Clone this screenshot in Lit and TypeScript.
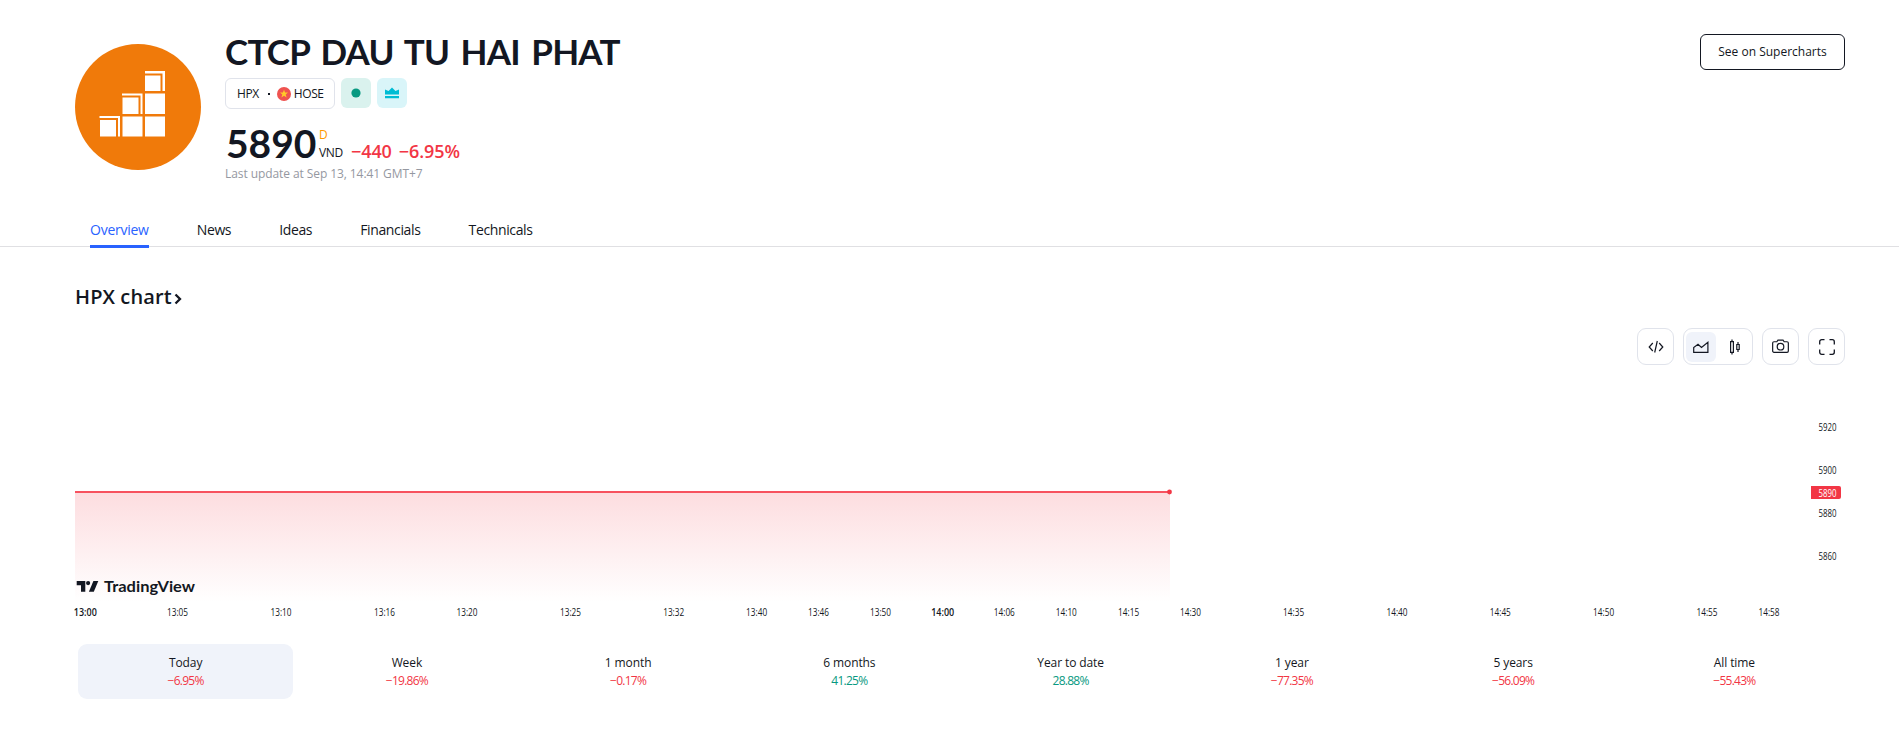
import { LitElement, html, css, svg } from "lit";
import { customElement } from "lit/decorators.js";
import { classMap } from "lit/directives/class-map.js";

const tabs = ["Overview", "News", "Ideas", "Financials", "Technicals"];

const periods = [
  { label: "Today", value: "−6.95%" },
  { label: "Week", value: "−19.86%" },
  { label: "1 month", value: "−0.17%" },
  { label: "6 months", value: "41.25%" },
  { label: "Year to date", value: "28.88%" },
  { label: "1 year", value: "−77.35%" },
  { label: "5 years", value: "−56.09%" },
  { label: "All time", value: "−55.43%" },
];

const times: [string, number, boolean?][] = [
  ["13:00", 10.3, true], ["13:05", 102.5], ["13:10", 206], ["13:16", 309.5],
  ["13:20", 392], ["13:25", 495.5], ["13:32", 598.7], ["13:40", 681.6],
  ["13:46", 743.5], ["13:50", 805.5], ["14:00", 867.7, true], ["14:06", 929.3],
  ["14:10", 991.3], ["14:15", 1053.6], ["14:30", 1115.5], ["14:35", 1218.6],
  ["14:40", 1322], ["14:45", 1425.3], ["14:50", 1528.6], ["14:55", 1632], ["14:58", 1694],
];

const prices: [string, number][] = [["5920", 31], ["5900", 74], ["5880", 117], ["5860", 159.5]];

@customElement("price-chart")
class PriceChart extends LitElement {
  static styles = css`
    :host { display: block; }
    svg { display: block; overflow: visible; }
    text { font-family: "Open Sans", sans-serif; font-size: 10px; fill: #131722; }
    .mid { text-anchor: middle; }
    .major { font-weight: 600; }
    .tag { fill: #fff; }
    .brand { font-family: Lato, sans-serif; font-weight: 700; font-size: 16px; }
  `;
  render() {
    return html`<svg width="1770" height="230" viewBox="0 0 1770 230">
      <defs>
        <linearGradient id="fade" x1="0" y1="0" x2="0" y2="1">
          <stop offset="0" stop-color="#f23645" stop-opacity=".17" />
          <stop offset="1" stop-color="#f23645" stop-opacity="0" />
        </linearGradient>
      </defs>
      <rect x="0" y="96" width="1095" height="110" fill="url(#fade)" />
      <rect x="0" y="95" width="1095" height="2" fill="#f7525f" />
      <circle cx="1094.5" cy="96" r="2.4" fill="#f23645" />
      ${prices.map(([p, y]) => svg`<text x="1743.5" y=${y + 4.3} textLength="18" lengthAdjust="spacingAndGlyphs">${p}</text>`)}
      <path d="M1736 90h28a2 2 0 0 1 2 2v9a2 2 0 0 1-2 2h-28z" fill="#f23645" />
      <text class="tag" x="1743.5" y="100.5" textLength="18" lengthAdjust="spacingAndGlyphs">5890</text>
      ${times.map(([t, x, major]) => svg`<text class=${major ? "mid major" : "mid"} x=${x} y="220.3" textLength=${major ? 23 : 21} lengthAdjust="spacingAndGlyphs">${t}</text>`)}
      <g transform="translate(1.7 185)" fill="#131722">
        <path d="M0 0h8.6v10.7H4.3V4.3H0z" />
        <circle cx="11.4" cy="2.1" r="2.1" />
        <path d="M12.2 10.7 16.7 0h4.9l-4.5 10.7z" />
      </g>
      <text class="brand" x="29" y="196" textLength="91" lengthAdjust="spacingAndGlyphs">TradingView</text>
    </svg>`;
  }
}

@customElement("app-root")
export class AppRoot extends LitElement {
  static styles = css`
    :host { display: block; width: 1899px; height: 753px; overflow: hidden; background: #fff; color: #131722; font-family: "Open Sans", sans-serif; }
    * { box-sizing: border-box; }
    svg { display: block; }
    .header { display: flex; height: 209px; padding: 34px 54px 0 75px; }
    .logo { margin: 10px 24px 0 0; flex: none; }
    .info { flex: 1; }
    .title { margin: -8px 0 0; height: 52px; font: 700 35px/51px Lato, sans-serif; letter-spacing: -.75px; word-spacing: 3.5px; white-space: nowrap; }
    .badges { display: flex; gap: 6px; height: 31px; }
    .chip { display: flex; align-items: center; width: 110px; height: 31px; padding-left: 11px; border: 1px solid #e0e3eb; border-radius: 6px; font-size: 12px; letter-spacing: -.4px; }
    .sep { width: 2px; height: 2px; margin: 0 7px 0 9px; background: #131722; }
    .flag { margin-right: 3px; }
    .badge { display: flex; align-items: center; justify-content: center; width: 30px; height: 30px; border-radius: 6px; }
    .open { background: #daf2ee; }
    .crown { background: #d9f5f9; }
    .quote { display: flex; height: 40px; margin-top: 14px; }
    .price { width: 94px; padding-left: 1px; font: 700 39px/40px Lato, sans-serif; }
    .unit { width: 32px; padding-top: 3px; font-size: 12px; line-height: 18px; letter-spacing: -.4px; display: flex; flex-direction: column; }
    .delay { color: #ff9800; }
    .change { display: flex; gap: 7px; padding-top: 16px; color: #f23645; font-weight: 600; font-size: 18px; line-height: 24px; letter-spacing: -.1px; }
    .updated { height: 20px; margin-top: 1px; color: #9598a1; font-size: 12px; line-height: 20px; letter-spacing: -.08px; white-space: nowrap; }
    .super { width: 145px; height: 36px; border: 1px solid #131722; border-radius: 6px; text-align: center; font-size: 12px; line-height: 34px; white-space: nowrap; }
    .tabs { display: flex; gap: 48px; height: 38px; padding-left: 90px; border-bottom: 1px solid #e0e0e3; }
    .tab { height: 39px; font-size: 14px; line-height: 42px; letter-spacing: -.36px; white-space: nowrap; }
    .current { color: #2962ff; border-bottom: 3px solid #2962ff; letter-spacing: -.25px; }
    .main { padding: 0 54px 0 75px; }
    .heading { display: flex; align-items: center; gap: 2px; height: 30px; margin: 34px 0 0; font-weight: 600; font-size: 20px; letter-spacing: .1px; }
    .chev { margin-top: 5px; }
    .tools { display: flex; justify-content: flex-end; gap: 9px; margin-top: 17px; height: 37px; }
    .tool { display: flex; align-items: center; justify-content: center; width: 37px; height: 37px; border: 1px solid #e0e3eb; border-radius: 9px; }
    .group { width: 70px; justify-content: flex-start; padding-left: 2px; }
    .seg { display: flex; align-items: center; justify-content: center; width: 30px; height: 30px; border-radius: 6px; }
    .on { background: #f0f3fa; }
    .next { margin-left: 4px; }
    .chart { margin-top: 31px; }
    .periods { display: grid; grid-template-columns: repeat(8, 1fr); margin-top: 18px; }
    .period { height: 55px; margin: 0 3px; padding-top: 10px; border-radius: 9px; text-align: center; font-size: 12px; line-height: 18px; letter-spacing: -.1px; }
    .selected { background: #f0f3fa; }
    .val { color: #f23645; letter-spacing: -.75px; }
    .up { color: #089981; }
  `;

  render() {
    return html`
      <header class="header">
        <svg class="logo" width="126" height="126" viewBox="0 0 126 126">
          <circle cx="63" cy="63" r="63" fill="#f07a0a" />
          <g fill="#fff">
            <path d="M24.5 72H45v20.5h-2V74H24.5z" />
            <path d="M25 76h16v16.5H25z" />
            <path d="M47 49.5h20.5V70h-2V51.5H47z" />
            <path d="M47.5 53.5h16V70h-16zM47.5 72.5h20v20h-20z" />
            <path d="M70 27h20v20h-2.5V29.5H70z" />
            <path d="M70 31.5h15.5V47H70zM70 49.5h20V70H70zM70 72.5h20v20H70z" />
          </g>
        </svg>
        <div class="info">
          <h1 class="title">CTCP DAU TU HAI PHAT</h1>
          <div class="badges">
            <div class="chip">
              <span>HPX</span><span class="sep"></span>
              <svg class="flag" width="14" height="14" viewBox="0 0 14 14"><circle cx="7" cy="7" r="7" fill="#ef5350" /><path d="m7 2.8 1.1 2.8H11L8.7 7.4l.9 3L7 8.7l-2.6 1.7.9-3L3 5.6h2.9z" fill="#ffca28" /></svg>
              <span>HOSE</span>
            </div>
            <div class="badge open"><svg width="10" height="10"><circle cx="5" cy="5" r="4.6" fill="#089981" /></svg></div>
            <div class="badge crown"><svg width="14" height="12" viewBox="0 0 14 12" fill="#00bcd4"><path d="M0 2.5 3.5 4 7 .5 10.5 4 14 2.5v5H0zM0 9h14v2.2H0z" /></svg></div>
          </div>
          <div class="quote">
            <div class="price">5890</div>
            <div class="unit"><span class="delay">D</span><span>VND</span></div>
            <div class="change"><span>−440</span><span>−6.95%</span></div>
          </div>
          <div class="updated">Last update at Sep 13, 14:41 GMT+7</div>
        </div>
        <div class="super">See on Supercharts</div>
      </header>
      <nav class="tabs">
        ${tabs.map((t, i) => html`<div class=${classMap({ tab: true, current: i === 0 })}>${t}</div>`)}
      </nav>
      <main class="main">
        <h2 class="heading"><span>HPX chart</span>
          <svg class="chev" width="8" height="12" viewBox="0 0 8 12" fill="none" stroke="#131722" stroke-width="2.3"><path d="m1.5 1.5 4.5 4.5-4.5 4.5" /></svg>
        </h2>
        <div class="tools">
          <div class="tool"><svg width="16" height="14" viewBox="0 0 16 14" fill="none" stroke="#131722" stroke-width="1.2"><path d="M4.8 3 1.2 7l3.6 4M11.2 3l3.6 4-3.6 4M9.3 1 6.7 12.5" /></svg></div>
          <div class="tool group">
            <div class="seg on"><svg width="16" height="14" viewBox="0 0 16 14" fill="none" stroke="#131722" stroke-width="1.2"><path d="M.7 12.3V7.5L5 4.3l3.5 3.2 6.4-5.2v10z" /></svg></div>
            <div class="seg next"><svg width="12" height="16" viewBox="0 0 12 16" fill="none" stroke="#131722" stroke-width="1.2"><path d="M1.6 2.7h2.8v10.6H1.6zM3 .5v2.2M3 13.3v2.2M7.8 5.5h2.4v5H7.8zM9 3v2.5M9 10.5V13" /></svg></div>
          </div>
          <div class="tool"><svg width="17" height="14.5" viewBox="0 0 18 15" fill="none" stroke="#131722" stroke-width="1.25"><path d="M2.1 2.7h3L6.3 1h5.4l1.2 1.7h3c.8 0 1.4.6 1.4 1.4v8.4c0 .8-.6 1.4-1.4 1.4H2.1c-.8 0-1.4-.6-1.4-1.4V4.1c0-.8.6-1.4 1.4-1.4z" /><circle cx="9" cy="8" r="3.5" /></svg></div>
          <div class="tool"><svg width="16" height="16" viewBox="0 0 16 16" fill="none" stroke="#131722" stroke-width="1.3"><path d="M.7 5.5V2.7a2 2 0 0 1 2-2h2.8M10.5.7h2.8a2 2 0 0 1 2 2v2.8M15.3 10.5v2.8a2 2 0 0 1-2 2h-2.8M5.5 15.3H2.7a2 2 0 0 1-2-2v-2.8" /></svg></div>
        </div>
        <price-chart class="chart"></price-chart>
        <div class="periods">
          ${periods.map((p, i) => html`<div class=${classMap({ period: true, selected: i === 0 })}>
            <div>${p.label}</div>
            <div class=${classMap({ val: true, up: !p.value.startsWith("−") })}>${p.value}</div>
          </div>`)}
        </div>
      </main>
    `;
  }
}
